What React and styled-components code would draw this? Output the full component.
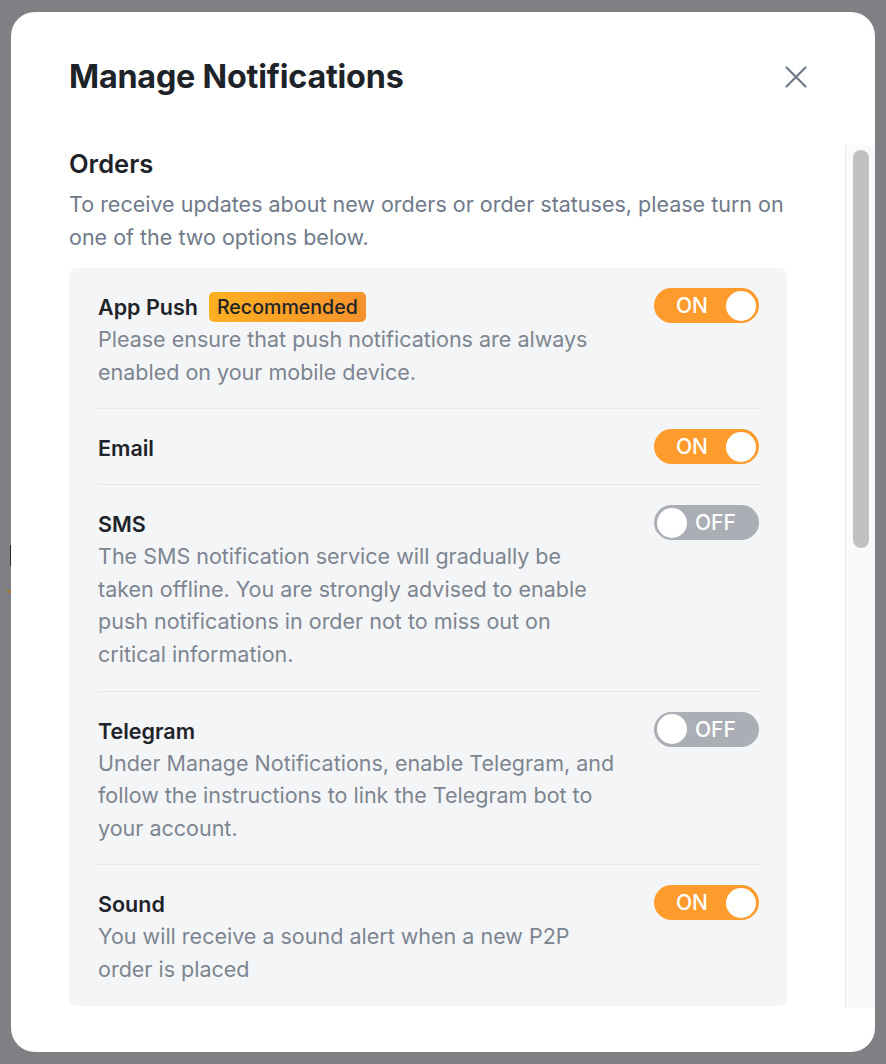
import React from "react";
import styled, { createGlobalStyle } from "styled-components";

const Global = createGlobalStyle`
  * { box-sizing: border-box; }
  html, body { margin: 0; padding: 0; }
  body {
    background: #808084;
    font-family: Inter, "Noto Sans", "Liberation Sans", sans-serif;
    -webkit-font-smoothing: antialiased;
  }
`;

const Backdrop = styled.div`
  position: relative;
  min-height: 100vh;
  display: flex;
  align-items: center;
  justify-content: center;
  padding: 12px 11px;
`;

const PageMark = styled.span`
  position: absolute;
  left: ${(p) => p.$left}px;
  top: ${(p) => p.$top}px;
  width: ${(p) => p.$w}px;
  height: ${(p) => p.$h}px;
  background: ${(p) => p.$color};
`;

const Modal = styled.div`
  position: relative;
  z-index: 1;
  width: 864px;
  height: 1040px;
  background: #ffffff;
  border-radius: 24px;
  padding: 45px 0 44px 58px;
  display: flex;
  flex-direction: column;
  overflow: hidden;
`;

const Header = styled.div`
  display: flex;
  align-items: center;
  justify-content: space-between;
  height: 40px;
  padding-right: 68px;
  margin-bottom: 48px;
`;

const Title = styled.h1`
  margin: 0;
  font-size: 32.3px;
  line-height: 40px;
  font-weight: 700;
  color: #1e2329;
  letter-spacing: -0.2px;
`;

const CloseButton = styled.button`
  border: 0;
  background: none;
  padding: 0;
  width: 22px;
  height: 22px;
  display: flex;
  align-items: center;
  justify-content: center;
  cursor: pointer;
  color: #707a8a;
`;

const ScrollArea = styled.div`
  display: flex;
  height: 863px;
`;

const ScrollContent = styled.div`
  flex: 1;
  overflow: hidden;
  padding: 3px 58px 0 0;
`;

const Track = styled.div`
  width: 30px;
  flex: none;
  background: #fafafa;
  border-left: 1px solid #e8e8e8;
  padding: 5px 6px 0 7px;
`;

const Thumb = styled.div`
  width: 16px;
  height: 398px;
  border-radius: 8px;
  background: #c1c1c1;
`;

const SectionTitle = styled.h2`
  margin: 0;
  font-size: 25.5px;
  line-height: 32px;
  font-weight: 600;
  color: #1e2329;
`;

const SectionDesc = styled.p`
  margin: 8px 0 14px;
  font-size: 21.5px;
  line-height: 33px;
  color: #707a8a;
`;

const Card = styled.div`
  background: #f4f5f7;
  border-radius: 8px;
  padding: 0 28px 0 29px;
`;

const Row = styled.div`
  display: flex;
  align-items: flex-start;
  justify-content: space-between;
  gap: 16px;
  padding: 23px 0 20px;
  & + & {
    border-top: 1px solid #e5e7eb;
  }
`;

const RowText = styled.div`
  flex: 1;
  max-width: 519px;
`;

const RowTitle = styled.div`
  display: flex;
  align-items: center;
  gap: 11px;
  font-size: 21.5px;
  line-height: 32px;
  font-weight: 600;
  color: #1e2329;
`;

const Badge = styled.span`
  display: inline-flex;
  align-items: center;
  height: 30px;
  padding: 0 8px;
  border-radius: 5px;
  background: linear-gradient(90deg, #fdb021 0%, #f5922c 100%);
  color: #1e2329;
  font-size: 19.6px;
  font-weight: 500;
`;

const RowDesc = styled.div`
  font-size: 21.5px;
  line-height: 32.6px;
  color: #7d8590;
`;

const Toggle = styled.button`
  flex: none;
  margin-top: -3px;
  width: 105px;
  height: 35px;
  border: 0;
  border-radius: 18px;
  padding: 0 3px;
  display: flex;
  align-items: center;
  flex-direction: ${(p) => (p.$on ? "row" : "row-reverse")};
  justify-content: space-between;
  background: ${(p) => (p.$on ? "#fd9c2d" : "#abafb5")};
  cursor: pointer;
  font-family: inherit;
`;

const ToggleLabel = styled.span`
  flex: 1;
  text-align: left;
  padding-left: ${(p) => (p.$on ? "19px" : "8px")};
  font-size: 21px;
  font-weight: 500;
  color: #ffffff;
`;

const Knob = styled.span`
  width: 30px;
  height: 30px;
  border-radius: 50%;
  background: #ffffff;
  flex: none;
`;

function Switch({ on }) {
  return (
    <Toggle $on={on} aria-pressed={on}>
      <ToggleLabel $on={on}>{on ? "ON" : "OFF"}</ToggleLabel>
      <Knob />
    </Toggle>
  );
}

const items = [
  {
    title: "App Push",
    badge: "Recommended",
    desc: "Please ensure that push notifications are always enabled on your mobile device.",
    on: true,
  },
  { title: "Email", on: true },
  {
    title: "SMS",
    desc: "The SMS notification service will gradually be taken offline. You are strongly advised to enable push notifications in order not to miss out on critical information.",
    on: false,
  },
  {
    title: "Telegram",
    desc: "Under Manage Notifications, enable Telegram, and follow the instructions to link the Telegram bot to your account.",
    on: false,
  },
  {
    title: "Sound",
    desc: "You will receive a sound alert when a new P2P order is placed",
    on: true,
  },
];

export default function App() {
  return (
    <>
      <Global />
      <Backdrop>
        <PageMark $left={10} $top={545} $w={2} $h={21} $color="#2b2b2f" />
        <PageMark $left={7} $top={590} $w={5} $h={3} $color="#a5713c" />
        <Modal>
          <Header>
            <Title>Manage Notifications</Title>
            <CloseButton aria-label="Close">
              <svg width="22" height="22" viewBox="0 0 22 22" fill="none">
                <path d="M1.5 1.5L20.5 20.5M20.5 1.5L1.5 20.5" stroke="currentColor" strokeWidth="2.2" strokeLinecap="round" />
              </svg>
            </CloseButton>
          </Header>
          <ScrollArea>
            <ScrollContent>
              <SectionTitle>Orders</SectionTitle>
              <SectionDesc>
                To receive updates about new orders or order statuses, please turn on one of the two options below.
              </SectionDesc>
              <Card>
                {items.map((it) => (
                  <Row key={it.title}>
                    <RowText>
                      <RowTitle>
                        {it.title}
                        {it.badge && <Badge>{it.badge}</Badge>}
                      </RowTitle>
                      {it.desc && <RowDesc>{it.desc}</RowDesc>}
                    </RowText>
                    <Switch on={it.on} />
                  </Row>
                ))}
              </Card>
            </ScrollContent>
            <Track>
              <Thumb />
            </Track>
          </ScrollArea>
        </Modal>
      </Backdrop>
    </>
  );
}
